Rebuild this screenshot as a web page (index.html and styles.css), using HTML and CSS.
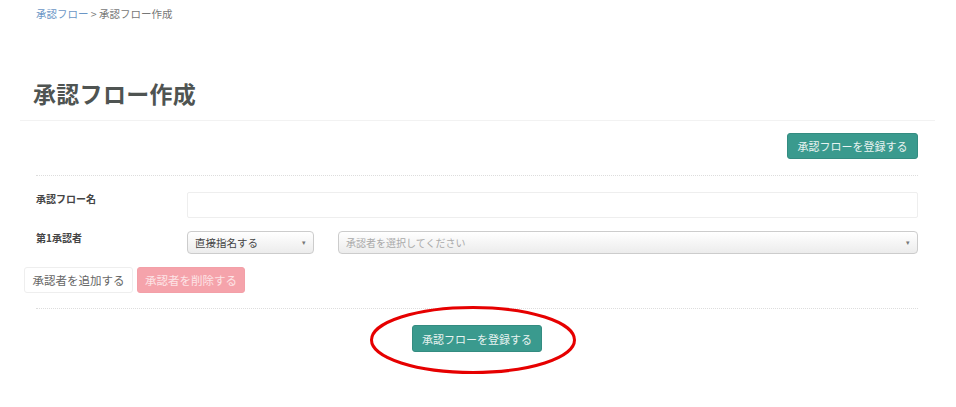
FILE: index.html
```html
<!DOCTYPE html>
<html>
<head>
	<meta charset="utf-8">
	<title>承認フロー作成</title>
	<link rel="stylesheet" href="styles.css">
</head>
<body>
	<div id="page">
		<div class="crumb">
			<a href="#">承認フロー</a> &gt; 承認フロー作成
		</div>
		<div class="head">
			<h1>承認フロー作成</h1>
		</div>
		<div class="toolbar">
			<button class="btn btn-teal">承認フローを登録する</button>
		</div>
		<div class="form">
			<div class="row">
				<label>承認フロー名</label>
				<input type="text" class="text">
			</div>
			<div class="row">
				<label>第1承認者</label>
				<div class="sel sel-small">直接指名する<span class="arrow">&#9662;</span></div>
				<div class="sel sel-wide placeholder">承認者を選択してください<span class="arrow">&#9662;</span></div>
			</div>
			<div class="actions">
				<button class="btn btn-white">承認者を追加する</button>
				<button class="btn btn-pink">承認者を削除する</button>
			</div>
		</div>
		<div class="foot">
			<button class="btn btn-teal btn-big">承認フローを登録する</button>
			<svg class="mark" width="208" height="70" viewBox="0 0 208 70">
				<ellipse cx="104" cy="35" rx="101.5" ry="32.5" fill="none" stroke="#e60000" stroke-width="3"/>
			</svg>
		</div>
	</div>
</body>
</html>
```

FILE: styles.css
```css
*{margin: 0;
	padding: 0;
	box-sizing: border-box;
}
body{
	font-family: "Noto Sans CJK JP", "Noto Sans", sans-serif;
	color: #555;
	background: #fff;
}
#page{
	margin: 0 21px 0 20px;
}
.crumb{
	padding: 7px 0 0 16px;
	font-size: 10.5px;
	line-height: 14px;
	color: #777;
}
.crumb a{
	color: #6b96c6;
	text-decoration: none;
}
.head{
	padding: 57px 0 12px 13px;
	border-bottom: 1px solid #f2f2f2;
}
.head h1{
	font-size: 23px;
	line-height: 30px;
	font-weight: bold;
	color: #4f5452;
	letter-spacing: 0.3px;
}
.toolbar{
	margin: 0 17px 0 16px;
	padding: 12px 0 16px;
	border-bottom: 1px dotted #ddd;
	display: flex;
	justify-content: flex-end;
}
.btn{
	font-family: inherit;
	font-size: 11px;
	height: 26px;
	padding: 0 10px;
	border-radius: 3px;
	border: 1px solid transparent;
	white-space: nowrap;
	cursor: pointer;
}
.btn-teal{
	background: #3a9a8e;
	border-color: #348c81;
	color: #e8f3f1;
	width: 131px;
	padding: 0;
}
.btn-big{
	height: 27px;
	width: 130px;
}
.btn-white{
	background: #fff;
	border-color: #eee;
	color: #666;
	width: 109px;
	padding: 0;
	font-size: 11.5px;
}
.btn-pink{
	background: #f5a3ab;
	border-color: #f3a0a8;
	color: #fde4e6;
	width: 108px;
	padding: 0;
	font-size: 11.5px;
}
.form{
	margin: 0 17px 0 16px;
	padding: 16px 0 15px;
	border-bottom: 1px dotted #ddd;
}
.row{
	display: flex;
	align-items: flex-start;
	margin-bottom: 13px;
}
.row label{
	width: 151px;
	font-size: 10px;
	line-height: 14px;
	font-weight: bold;
	color: #444;
}
.text{
	flex: 1;
	height: 26px;
	border: 1px solid #eee;
	border-radius: 2px;
}
.sel{
	position: relative;
	height: 23px;
	border: 1px solid #ccc;
	border-radius: 4px;
	background: linear-gradient(#fff, #ececec);
	font-size: 10.5px;
	line-height: 21px;
	padding-left: 7px;
	color: #444;
}
.sel-small{
	width: 127px;
	margin-right: 24px;
}
.sel-wide{
	flex: 1;
}
.placeholder{
	color: #aaa;
	font-size: 10px;
}
.arrow{
	position: absolute;
	right: 7px;
	top: 0;
	font-size: 7px;
	color: #777;
}
.actions{
	display: flex;
	gap: 4px;
	margin: 1px 0 0 -12px;
}
.foot{
	position: relative;
	margin: 0 17px 0 16px;
	padding: 16px 0 40px;
	display: flex;
	justify-content: center;
}
.mark{
	position: absolute;
	left: 333px;
	top: -4px;
	overflow: visible;
}
```
